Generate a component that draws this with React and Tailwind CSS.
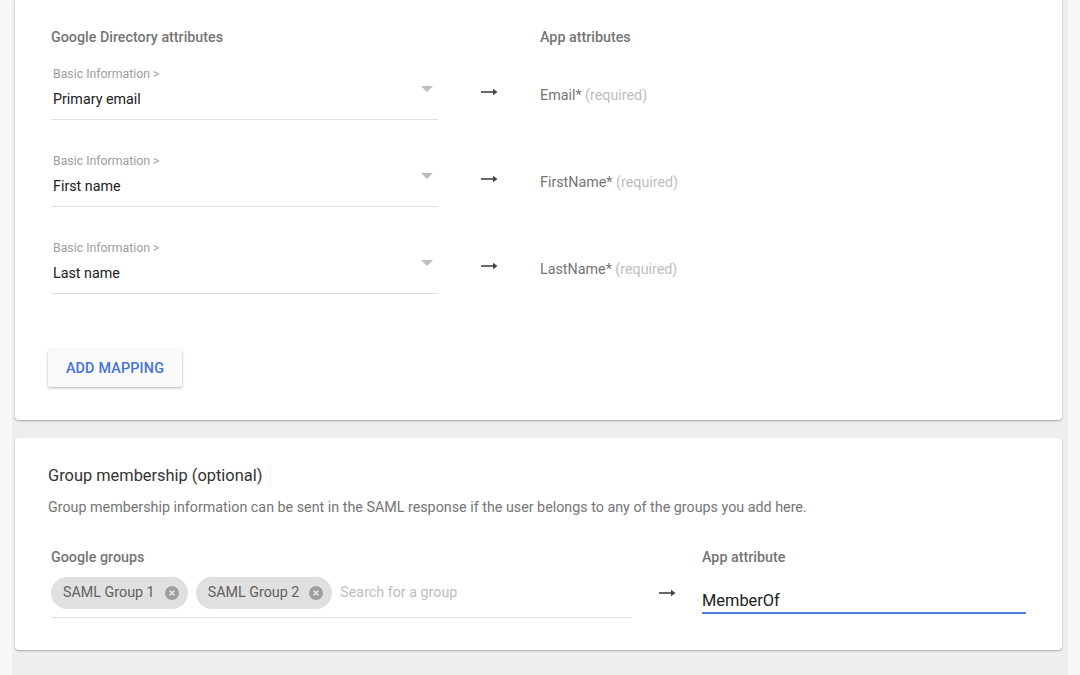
import React from 'react';

const rows = [
  { value: 'Primary email', attr: 'Email*' },
  { value: 'First name', attr: 'FirstName*' },
  { value: 'Last name', attr: 'LastName*' },
];

const Arrow = () => (
  <svg width="17" height="8" viewBox="0 0 17 8">
    <path d="M0 4h13" stroke="#444" strokeWidth="1.6" />
    <path d="M12 0.8L16.5 4L12 7.2z" fill="#444" />
  </svg>
);

const Chip = ({ label }) => (
  <div className="flex items-center h-[32px] rounded-full bg-[#e0e0e0] pl-[12px] pr-[9px] gap-[10px]">
    <span className="text-[14.3px] text-[#616161]">{label}</span>
    <svg width="14" height="14" viewBox="0 0 14 14">
      <circle cx="7" cy="7" r="7" fill="#9e9e9e" />
      <path d="M4.6 4.6l4.8 4.8M9.4 4.6l-4.8 4.8" stroke="#e0e0e0" strokeWidth="1.6" />
    </svg>
  </div>
);

export default function App() {
  return (
    <div className="min-h-screen bg-[#f8f8f8] font-['Roboto','Liberation_Sans',sans-serif]">
      <div className="ml-[12px] mr-[12px] bg-[#eeeeee] pl-[3px] pr-[6px] pb-[25px] min-h-screen">
        {/* Attribute mapping card */}
        <div className="bg-white rounded-b-[4px] shadow-[0_1px_2px_rgba(0,0,0,0.3)] pl-[36px] pt-[27px] pb-[33px]">
          <div className="flex text-[14.3px] leading-[20px] font-medium text-[#757575]">
            <div className="w-[489px]">Google Directory attributes</div>
            <div>App attributes</div>
          </div>

          <div className="mt-[19px]">
            {rows.map((row) => (
              <div key={row.value} className="flex items-center mb-[33px]">
                <div className="w-[387px] h-[54px] border-b border-[#e0e0e0] flex items-start">
                  <div className="flex-1 pl-[2px]">
                    <div className="text-[12.3px] leading-[16px] text-[#9e9e9e]">Basic Information &gt;</div>
                    <div className="mt-[7px] text-[14.3px] leading-[20px] text-[#212121]">{row.value}</div>
                  </div>
                  <div className="mt-[20px] mr-[5px] w-0 h-0 border-l-[6px] border-r-[6px] border-t-[6px] border-l-transparent border-r-transparent border-t-[#bdbdbd]" />
                </div>
                <div className="w-[102px] flex justify-center -mt-[2px]">
                  <Arrow />
                </div>
                <div className="text-[14.3px] leading-[20px] text-[#757575] pt-[4px]">
                  {row.attr} <span className="text-[#bdbdbd]">(required)</span>
                </div>
              </div>
            ))}
          </div>

          <button className="mt-[23px] -ml-[3px] h-[37px] w-[134px] rounded-[2px] bg-[#fafafa] shadow-[0_1px_3px_rgba(0,0,0,0.3)] text-[14.3px] font-medium text-[#4672dc] tracking-[0.2px]">
            ADD MAPPING
          </button>
        </div>

        {/* Group membership card */}
        <div className="mt-[18px] bg-white rounded-[4px] shadow-[0_1px_2px_rgba(0,0,0,0.3)] pl-[33px] pt-[26px] h-[212px]">
          <div className="flex items-center">
            <h2 className="text-[16.4px] leading-[24px] text-[#333333]">Group membership (optional)</h2>
            <div className="ml-[8px] w-px h-[20px] bg-[#eef0f5]" />
          </div>
          <p className="mt-[9px] text-[14.3px] leading-[20px] text-[#757575]">
            Group membership information can be sent in the SAML response if the user belongs to any of the groups you add here.
          </p>

          <div className="mt-[30px] flex pl-[3px]">
            <div className="w-[581px]">
              <div className="text-[14.3px] leading-[20px] font-medium text-[#757575]">Google groups</div>
              <div className="mt-[10px] flex items-center gap-[8px] pb-[8px] border-b border-[#e0e0e0]">
                <Chip label="SAML Group 1" />
                <Chip label="SAML Group 2" />
                <span className="text-[14.3px] text-[#bdbdbd]">Search for a group</span>
              </div>
            </div>
            <div className="w-[70px] flex justify-center pt-[42px]">
              <Arrow />
            </div>
            <div className="w-[324px]">
              <div className="text-[14.3px] leading-[20px] font-medium text-[#757575]">App attribute</div>
              <div className="mt-[23px] text-[16.4px] leading-[22px] text-[#212121] border-b-2 border-[#4a7fe0]">MemberOf</div>
            </div>
          </div>
        </div>
      </div>
    </div>
  );
}
